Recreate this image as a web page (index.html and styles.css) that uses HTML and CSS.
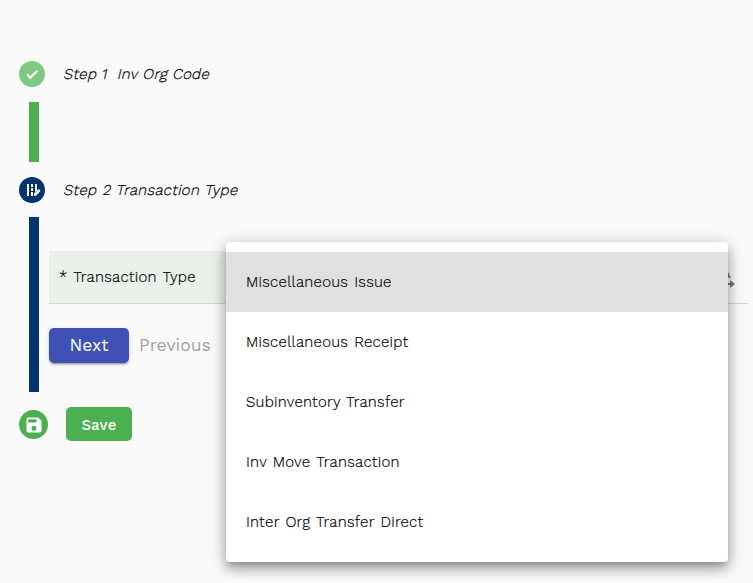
FILE: index.html
```html
<!DOCTYPE html>
<html lang="en">
<head>
<meta charset="utf-8">
<title>Transaction</title>
<link rel="stylesheet" href="styles.css">
</head>
<body>
<main class="stepper">
  <section class="step step-one">
    <header class="step-header">
      <span class="badge badge-done"><svg width="16" height="16" viewBox="0 0 24 24"><path d="M4.5 12.5 9.5 17.5 20 7" fill="none" stroke="currentColor" stroke-width="3.2"/></svg></span>
      <h2 class="step-title">Step 1&nbsp; Inv Org Code</h2>
    </header>
    <div class="rail rail-done"></div>
  </section>
  <section class="step step-two">
    <header class="step-header">
      <span class="badge badge-active"><svg width="18" height="18" viewBox="0 0 18 18" fill="currentColor"><path d="M4 3h2v12H4zM8 3h2v3H8zM8 7h2v3H8zM8 11h2v4H8zM12 3h2v6l-2 2zM11 12.5 15 8.5q1-.7 2 .5.8 1-.2 1.8L13 14.8H11z"/></svg></span>
      <h2 class="step-title">Step 2 Transaction Type</h2>
    </header>
    <div class="step-body">
      <div class="rail rail-active"></div>
      <div class="form">
        <div class="field">
          <label class="field-label">* Transaction Type</label>
          <div class="field-value"><svg class="field-icon" width="20" height="20" viewBox="0 0 20 20"><path d="M3 11 9-1h3l4 8h-2l-1-1H8l-3 5zM7 12h8V9l5 4-5 4v-3H7z" fill="#777"/></svg></div>
        </div>
        <div class="actions">
          <button class="btn next">Next</button>
          <button class="btn previous">Previous</button>
        </div>
      </div>
    </div>
  </section>
  <footer class="save-row">
    <span class="badge badge-save"><svg width="20" height="20" viewBox="0 0 24 24"><path d="M17 3H5a2 2 0 0 0-2 2v14a2 2 0 0 0 2 2h14a2 2 0 0 0 2-2V7zm-5 16a3 3 0 1 1 0-6 3 3 0 0 1 0 6zm3-10H5V5h10z" fill="currentColor"/></svg></span>
    <button class="btn save">Save</button>
  </footer>
</main>
<ul class="menu">
  <li class="option selected">Miscellaneous Issue</li>
  <li class="option">Miscellaneous Receipt</li>
  <li class="option">Subinventory Transfer</li>
  <li class="option">Inv Move Transaction</li>
  <li class="option">Inter Org Transfer Direct</li>
</ul>
</body>
</html>
```
FILE: styles.css
```css
* { box-sizing: border-box; }
body {
  margin: 0;
  height: 583px;
  overflow: hidden;
  background: #fafafa;
  color: #000;
  font: 300 15px/20px "Work Sans", Inter, "Liberation Sans", sans-serif;
  letter-spacing: .26px;
  word-spacing: 1.2px;
  -webkit-text-stroke: .2px;
}
.stepper { padding: 61px 5px 0 19px; }
.step-header { display: flex; align-items: center; gap: 18px; height: 26px; }
.step-title { margin: 0; font: inherit; white-space: pre; letter-spacing: .26px; word-spacing: .5px; transform: skewX(-13deg); transform-origin: 0 75%; }
.step-one .step-title { letter-spacing: .2px; word-spacing: .2px; }
.badge { display: flex; align-items: center; justify-content: center; flex: none; width: 26px; height: 26px; border-radius: 50%; color: #fff; }
.badge-done { background: #81c784; }
.badge-active { background: #03346e; }
.badge-save { width: 29px; height: 29px; margin-top: 1px; background: #4caf50; }
.badge svg { display: block; }
.rail { width: 10px; margin-left: 10px; flex: none; }
.step-one { height: 115.6px; }
.rail-done { height: 60px; margin-top: 14.6px; background: #4caf50; }
.step-body { display: flex; gap: 10px; margin-top: 14.8px; height: 175px; }
.rail-active { background: #03346e; }
.form { flex: 1; padding-top: 33.6px; }
.field { display: flex; height: 53px; border-bottom: 1px solid #cfd8d5; }
.field-label { width: 190px; padding: 16px 0 0 10px; background: #e9f1ea; white-space: nowrap; }
.field-value { flex: 1; display: flex; justify-content: flex-end; padding: 20px 13px 0 0; }
.actions { display: flex; align-items: center; gap: 10px; margin-top: 24px; }
.btn { border: 0; padding: 0; border-radius: 5px; font-family: inherit; white-space: nowrap; -webkit-text-stroke: 0; }
.next { width: 80px; height: 35px; background: #3f51b5; color: #fff; font-size: 17.5px; font-weight: 400; letter-spacing: 0; box-shadow: 0 3px 1px -2px rgba(0,0,0,.2), 0 2px 2px rgba(0,0,0,.14), 0 1px 5px rgba(0,0,0,.12); }
.previous { background: none; color: #a2a2a2; font-size: 17.5px; font-weight: 400; letter-spacing: 0; }
.save-row { display: flex; align-items: center; gap: 18px; margin-top: 15px; height: 34px; }
.save { width: 66px; height: 34px; padding-top: 1px; background: #4caf50; color: #fff; font-size: 15px; font-weight: 500; letter-spacing: .2px; }
.menu {
  position: absolute;
  left: 226px;
  top: 242px;
  width: 502px;
  height: 320px;
  margin: 0;
  padding: 10px 0;
  list-style: none;
  background: #fff;
  border-radius: 4px;
  box-shadow: 0 5px 5px -3px rgba(0,0,0,.2), 0 8px 10px 1px rgba(0,0,0,.14), 0 3px 14px 2px rgba(0,0,0,.12), 0 4px 20px rgba(0,0,0,.15);
}
.option { display: flex; align-items: center; height: 60px; padding-left: 20px; }
.selected { background: #e0e0e0; }
```
